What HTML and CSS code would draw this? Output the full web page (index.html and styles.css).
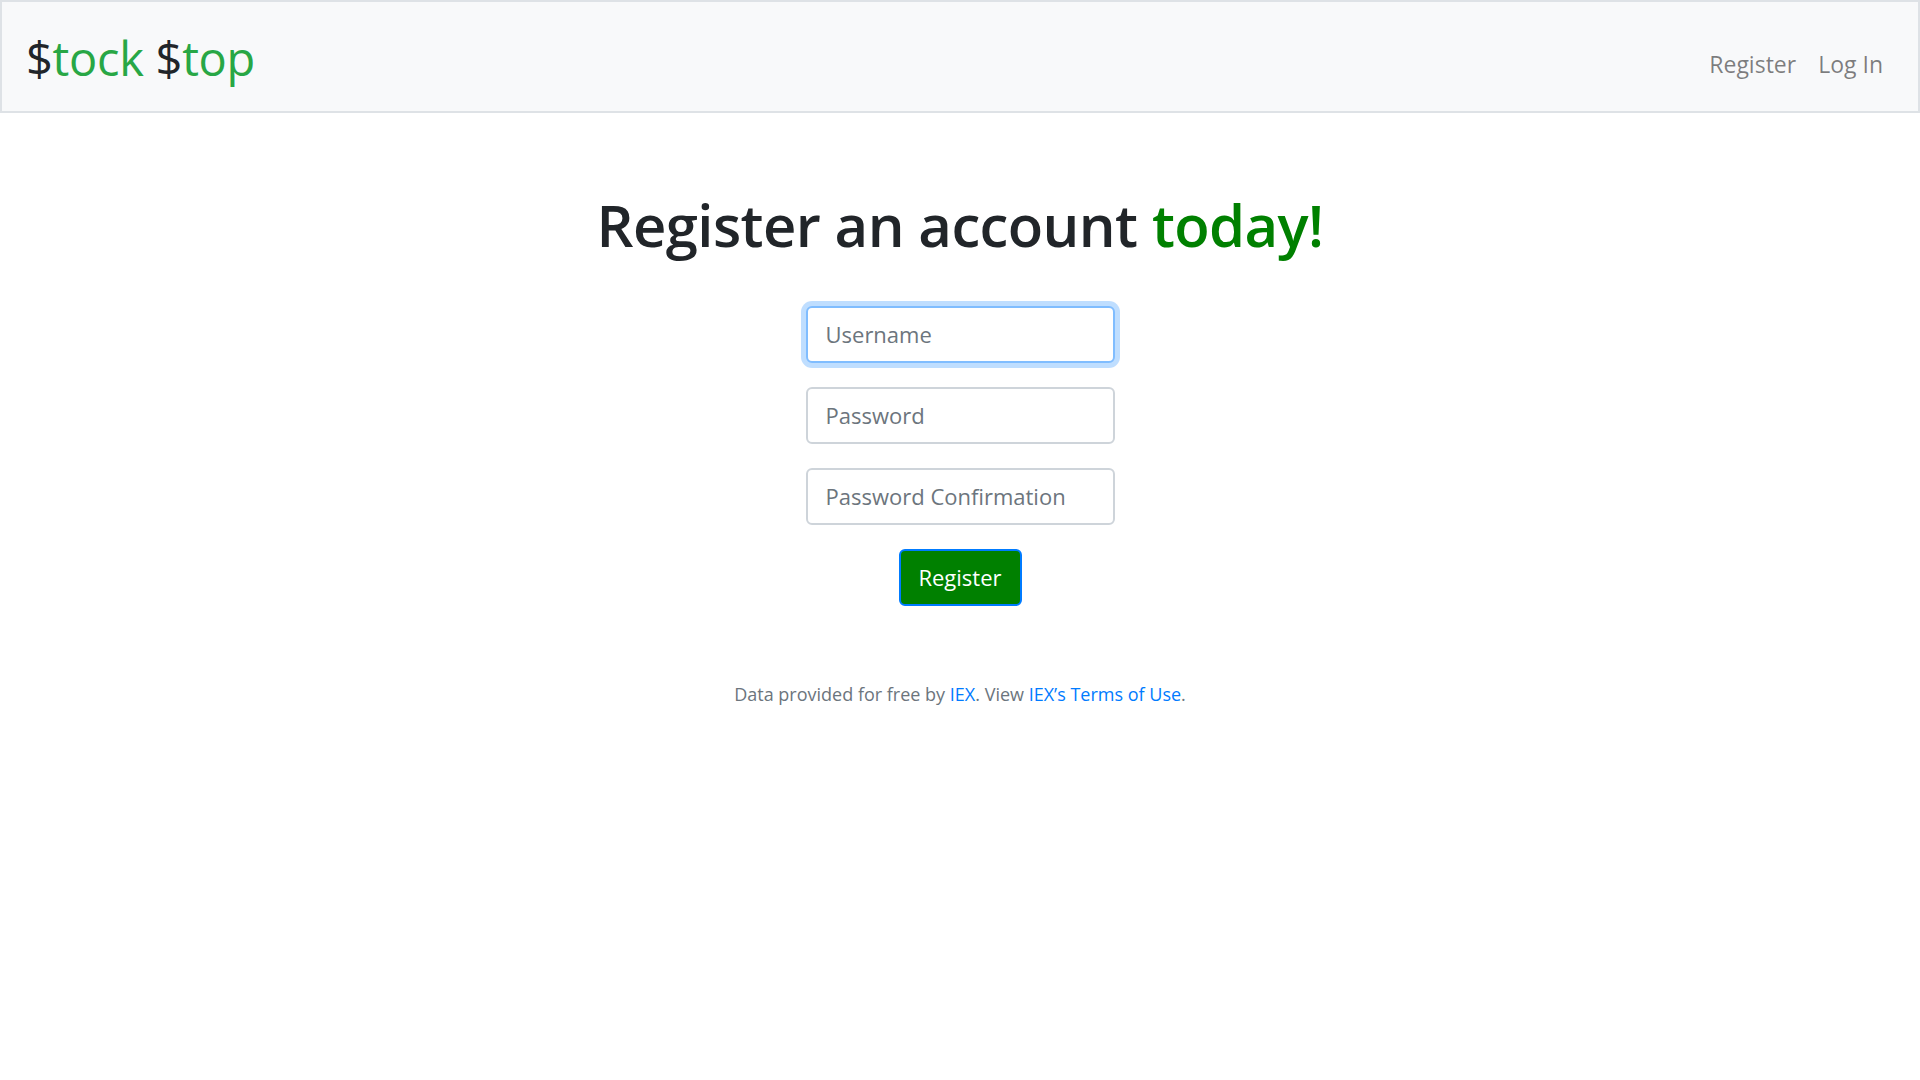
FILE: index.html
```html
<!DOCTYPE html>
<html lang="en">
<head>
<meta charset="utf-8">
<title>Stock Stop: Register</title>
<link rel="stylesheet" href="styles.css">
</head>
<body>
<nav class="navbar">
  <a class="brand" href="#"><span class="dollar">$</span><span class="green">tock</span> <span class="dollar">$</span><span class="green">top</span></a>
  <ul class="nav">
    <li><a href="#">Register</a></li>
    <li><a href="#">Log In</a></li>
  </ul>
</nav>
<main class="main">
  <h1 class="title">Register an account <span class="today">today!</span></h1>
  <form class="form">
    <div class="group"><input class="control focus" type="text" placeholder="Username"></div>
    <div class="group"><input class="control" type="password" placeholder="Password"></div>
    <div class="group"><input class="control" type="password" placeholder="Password Confirmation"></div>
    <button class="btn" type="button">Register</button>
  </form>
</main>
<footer class="footer">
  Data provided for free by <a href="#">IEX</a>. View <a href="#">IEX’s Terms of Use</a>.
</footer>
</body>
</html>
```
FILE: styles.css
```css
html, body {
  margin: 0;
  padding: 0;
  background: #fff;
}
body {
  font-family: "Open Sans", "Noto Sans", sans-serif;
  color: #212529;
  font-size: 24px;
  line-height: 1.5;
}
.navbar {
  display: flex;
  align-items: center;
  justify-content: space-between;
  background: #f8f9fa;
  border: 2px solid #dee2e6;
  height: 113px;
  box-sizing: border-box;
  padding: 0 24px;
}
.brand {
  font-size: 47px;
  text-decoration: none;
  line-height: 1;
  margin-top: 4px;
  letter-spacing: -0.3px;
}
.dollar { color: #212529; }
.green { color: #28a745; }
.nav {
  display: flex;
  list-style: none;
  margin: 0;
  padding: 0;
  margin-top: 16px;
}
.nav a {
  display: block;
  padding: 0 11px;
  color: rgba(0,0,0,.5);
  text-decoration: none;
  font-size: 23px;
}
.main {
  display: flex;
  flex-direction: column;
  align-items: center;
  padding: 77px 0 75px;
}
.title {
  font-size: 58px;
  font-weight: 600;
  line-height: 1.2;
  margin: 0 0 46px;
  letter-spacing: -0.6px;
}
.today { color: #008000; }
.form {
  display: flex;
  flex-direction: column;
  align-items: center;
}
.group {
  margin-bottom: 24px;
}
.control {
  display: block;
  width: 309px;
  height: 57px;
  box-sizing: border-box;
  padding: 8px 18px;
  font-family: inherit;
  font-size: 22px;
  color: #495057;
  background: #fff;
  border: 2px solid #ced4da;
  border-radius: 6px;
  outline: none;
}
.control::placeholder { color: #6c757d; opacity: 1; }
.control.focus {
  border-color: #80bdff;
  box-shadow: 0 0 0 5px rgba(0,123,255,.25);
}
.btn {
  font-family: inherit;
  font-size: 22px;
  color: #fff;
  background: #008000;
  border: 2px solid #007bff;
  border-radius: 6px;
  width: 123px;
  height: 57px;
  padding: 0;
  line-height: 1;
}
.footer {
  text-align: center;
  font-size: 18px;
  color: #6c757d;
}
.footer a {
  color: #007bff;
  text-decoration: none;
}
```
